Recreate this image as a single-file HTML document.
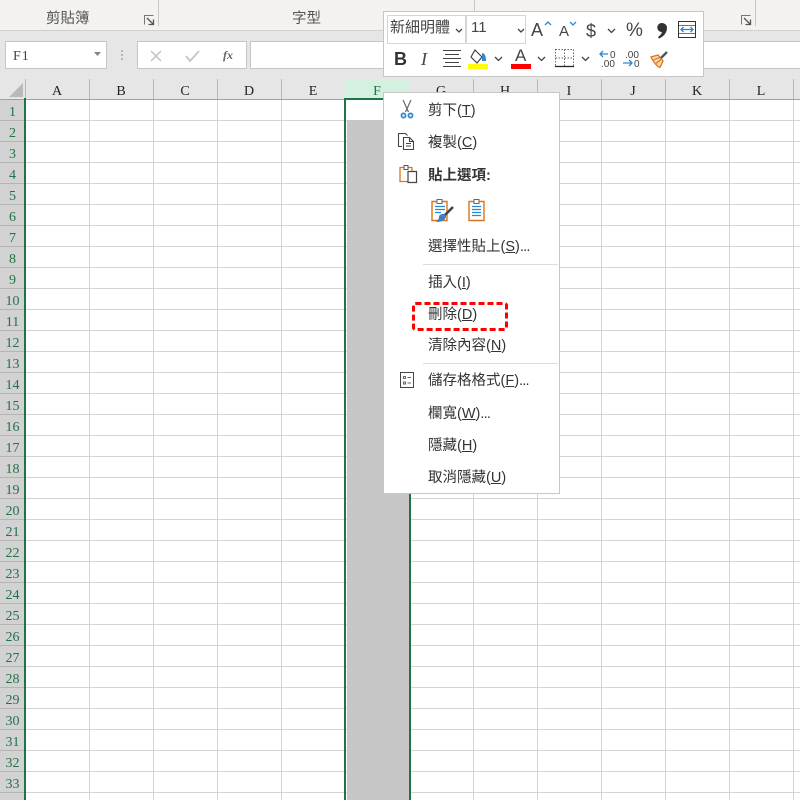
<!DOCTYPE html>
<html><head><meta charset="utf-8">
<style>
html,body{margin:0;padding:0;background:#fff}
#p{position:relative;width:800px;height:800px;overflow:hidden;background:#fff;font-family:"Liberation Sans","Noto Sans CJK TC",sans-serif;color:#444}
#p div,#p svg{position:absolute}
.t{white-space:nowrap}
.ch{font:14px/20px "Liberation Serif",serif;color:#222;text-align:center;top:82px;height:17px;width:64px;overflow:hidden}
#rows{left:0;top:100px;width:24px}
#rows span{display:block;height:20px;border-bottom:1px solid #b4b4b4;font:14px/25px "Liberation Serif",serif;color:#217346;text-align:center;padding-left:1px;box-sizing:content-box;width:23px}
.mi{left:428px;font-size:14.5px;line-height:20px;color:#333;white-space:nowrap;height:20px;margin-top:1px}
.mi u{text-underline-offset:1px}
.mi i{font-style:normal;letter-spacing:-.8px}
.sep{left:423px;width:135px;height:1px;background:#dcdcdc}
.ln{top:79px;width:1px;height:20px;background:#b9b9b9}
</style></head><body>
<div id="p">
<!-- ribbon -->
<div style="left:0;top:0;width:800px;height:30px;background:#f3f2f1"></div>
<div style="left:0;top:30px;width:800px;height:1px;background:#d2d0ce"></div>
<div style="left:158px;top:0;width:1px;height:26px;background:#c8c6c4"></div>
<div style="left:474px;top:0;width:1px;height:11px;background:#c8c6c4"></div>
<div style="left:755px;top:0;width:1px;height:26px;background:#c8c6c4"></div>
<div class="t" style="left:46px;top:9px;font-size:14.500px;line-height:20px;color:#555">剪貼簿</div>
<div class="t" style="left:292px;top:9px;font-size:14.500px;line-height:20px;color:#555">字型</div>
<svg style="left:144px;top:15px" width="11" height="11" viewBox="0 0 11 11"><path d="M9.500 .5H.5v9" fill="none" stroke="#777"/><path d="M3 3l6 6M9.500 4.500v5h-5" fill="none" stroke="#555" stroke-width="1.300"/></svg>
<svg style="left:741px;top:15px" width="11" height="11" viewBox="0 0 11 11"><path d="M9.500 .5H.5v9" fill="none" stroke="#777"/><path d="M3 3l6 6M9.500 4.500v5h-5" fill="none" stroke="#555" stroke-width="1.300"/></svg>
<!-- formula bar -->
<div style="left:0;top:31px;width:800px;height:48px;background:#e6e6e6"></div>
<div style="left:5px;top:41px;width:100px;height:26px;background:#fff;border:1px solid #c6c6c6"></div>
<div class="t" style="left:13px;top:47px;font:14px/20px 'Liberation Serif',serif;color:#444;letter-spacing:1px">F1</div>
<svg style="left:94px;top:52px" width="7" height="4"><path d="M0 0h7L3.500 4z" fill="#8a7f84"/></svg>
<div style="left:121px;top:50px;width:2px;height:2px;background:#b5b5b5;box-shadow:0 4px #b5b5b5,0 8px #b5b5b5"></div>
<div style="left:137px;top:41px;width:108px;height:26px;background:#fff;border:1px solid #c6c6c6"></div>
<svg style="left:150px;top:50px" width="12" height="12"><path d="M1 1l10 10M11 1L1 11" stroke="#c8c8c8" stroke-width="1.600" fill="none"/></svg>
<svg style="left:185px;top:50px" width="15" height="12"><path d="M1 6l4 5 9-10" stroke="#c8c8c8" stroke-width="2" fill="none"/></svg>
<div class="t" style="left:223px;top:46px;font:italic bold 12px/18px 'Liberation Serif',serif;color:#666">fx</div>
<div style="left:250px;top:41px;width:560px;height:26px;background:#fff;border:1px solid #c6c6c6"></div>
<!-- grid -->
<div style="left:26px;top:100px;width:774px;height:700px;background-color:#fff;background-image:repeating-linear-gradient(to right,transparent 0,transparent 63px,#d4d4d4 63px,#d4d4d4 64px),repeating-linear-gradient(to bottom,transparent 0,transparent 20px,#d4d4d4 20px,#d4d4d4 21px)"></div>
<!-- column header -->
<div style="left:0;top:79px;width:800px;height:20px;background:#e6e6e6"></div>
<div style="left:0;top:99px;width:800px;height:1px;background:#a0a0a0"></div>
<svg style="left:9px;top:83px" width="14" height="14"><path d="M14 0v14H0z" fill="#b9b9b9"/></svg>
<div class="ln" style="left:25px"></div>
<div class="ln" style="left:89px"></div>
<div class="ln" style="left:153px"></div>
<div class="ln" style="left:217px"></div>
<div class="ln" style="left:281px"></div>
<div class="ln" style="left:473px"></div>
<div class="ln" style="left:537px"></div>
<div class="ln" style="left:601px"></div>
<div class="ln" style="left:665px"></div>
<div class="ln" style="left:729px"></div>
<div class="ln" style="left:793px"></div>
<div style="left:346px;top:79px;width:63px;height:20px;background:#d3f0e0"></div>
<div class="ch" style="left:25px">A</div>
<div class="ch" style="left:89px">B</div>
<div class="ch" style="left:153px">C</div>
<div class="ch" style="left:217px">D</div>
<div class="ch" style="left:281px">E</div>
<div class="ch" style="left:345px;color:#217346">F</div>
<div class="ch" style="left:409px">G</div>
<div class="ch" style="left:473px">H</div>
<div class="ch" style="left:537px">I</div>
<div class="ch" style="left:601px">J</div>
<div class="ch" style="left:665px">K</div>
<div class="ch" style="left:729px">L</div>
<!-- row header -->
<div id="rows" style="background:#d2d2d2;height:700px"><span>1</span><span>2</span><span>3</span><span>4</span><span>5</span><span>6</span><span>7</span><span>8</span><span>9</span><span>10</span><span>11</span><span>12</span><span>13</span><span>14</span><span>15</span><span>16</span><span>17</span><span>18</span><span>19</span><span>20</span><span>21</span><span>22</span><span>23</span><span>24</span><span>25</span><span>26</span><span>27</span><span>28</span><span>29</span><span>30</span><span>31</span><span>32</span><span>33</span></div>
<div style="left:24px;top:98px;width:2px;height:702px;background:#217346"></div>
<!-- selection -->
<div style="left:347px;top:120px;width:62px;height:680px;background:#c6c6c6"></div>
<div style="left:344px;top:98px;width:67px;height:2px;background:#217346"></div>
<div style="left:344px;top:98px;width:2px;height:702px;background:#217346"></div>
<div style="left:409px;top:98px;width:2px;height:702px;background:#217346"></div>
<!-- context menu -->
<div style="left:383px;top:92px;width:175px;height:400px;background:#fff;border:1px solid #c6c6c6"></div>
<svg style="left:400px;top:100px" width="14" height="19" viewBox="0 0 14 19"><path d="M3 0l5.500 12M11 0L5.500 12" stroke="#666" stroke-width="1.200" fill="none"/><circle cx="3.500" cy="15.500" r="2.100" fill="none" stroke="#2e86d0" stroke-width="1.700"/><circle cx="10.500" cy="15.500" r="2.100" fill="none" stroke="#2e86d0" stroke-width="1.700"/></svg>
<div class="mi" style="top:100px">剪下(<u>T</u>)</div>
<svg style="left:397px;top:132px" width="19" height="19" viewBox="0 0 19 19" fill="none" stroke="#444" stroke-width="1.100"><path d="M5 14.500H1.500V1.500h7l2 2"/><path d="M6.500 5.500h6l4 4v8h-10z" fill="#fff"/><path d="M12.500 5.500v4h4M9 11.500h5M9 14h5"/></svg>
<div class="mi" style="top:132px">複製(<u>C</u>)</div>
<svg style="left:399px;top:164px" width="19" height="20" viewBox="0 0 19 20" fill="none"><path d="M1 3.500h12v14H1z" stroke="#d9761d" stroke-width="1.300"/><path d="M5 1.500h4v4H5z" stroke="#555" fill="#fff"/><path d="M9 7.500h8.500v11H9z" stroke="#444" stroke-width="1.200" fill="#fff"/></svg>
<div class="mi" style="top:165px;font-weight:700;color:#333;font-size:14.500px">貼上選項:</div>
<svg style="left:431px;top:198px" width="24" height="26" viewBox="0 0 24 26" fill="none"><path d="M1 3.500h15v19H1z" stroke="#d9761d" stroke-width="1.400" fill="#fff"/><path d="M6 1.500h5v4H6z" stroke="#666" fill="#fff"/><path d="M4 8.500h10M4 11.500h10M4 14.500h6" stroke="#2e86d0" stroke-width="1.200"/><path d="M22 9L13 18" stroke="#444" stroke-width="2.600"/><path d="M12 16c2 0 3 1 3 3-1 4-6 5-10 5 2-2 3-3 3-5 0-2 2-3 4-3z" fill="#3b7fc4"/></svg>
<svg style="left:468px;top:198px" width="18" height="24" viewBox="0 0 18 24" fill="none"><path d="M1 3.500h15v19H1z" stroke="#d9761d" stroke-width="1.400" fill="#fff"/><path d="M6 1.500h5v4H6z" stroke="#666" fill="#fff"/><path d="M4 8.500h9M4 11.500h9M4 14.500h9M4 17.500h9" stroke="#2e86d0" stroke-width="1.200"/></svg>
<div class="mi" style="top:236px">選擇性貼上(<u>S</u>)<i>...</i></div>
<div class="sep" style="top:264px"></div>
<div class="mi" style="top:272px">插入(<u>I</u>)</div>
<div class="mi" style="top:304px">刪除(<u>D</u>)</div>
<svg style="left:412px;top:302px" width="97" height="30" fill="none"><rect x="1.500" y="1.500" width="93" height="26" rx="2" stroke="#f00" stroke-width="3" stroke-dasharray="6 3"/></svg>
<div class="mi" style="top:335px">清除內容(<u>N</u>)</div>
<div class="sep" style="top:363px"></div>
<svg style="left:400px;top:372px" width="14" height="16" viewBox="0 0 14 16" fill="none"><path d="M.5.500h13v15H.5z" stroke="#444"/><path d="M3.500 4.500h2v2h-2zM3.500 10h2v2h-2z" stroke="#666"/><path d="M7.500 5.500h3.500M7.500 11h3.500" stroke="#666"/></svg>
<div class="mi" style="top:370px">儲存格格式(<u>F</u>)<i>...</i></div>
<div class="mi" style="top:403px">欄寬(<u>W</u>)<i>...</i></div>
<div class="mi" style="top:435px">隱藏(<u>H</u>)</div>
<div class="mi" style="top:467px">取消隱藏(<u>U</u>)</div>
<!-- mini toolbar -->
<div style="left:383px;top:11px;width:319px;height:64px;background:#fff;border:1px solid #c6c6c6"></div>
<div style="left:387px;top:15px;width:77px;height:27px;border:1.500px solid #d6d6d6"></div>
<div style="left:466px;top:15px;width:58px;height:27px;border:1.500px solid #d6d6d6"></div>
<div class="t" style="left:390px;top:18px;font-size:15px;line-height:20px;color:#444">新細明體</div>
<div class="t" style="left:471px;top:18px;font-size:15px;line-height:20px;color:#444">11</div>
<svg style="left:455px;top:28px" width="72" height="8" fill="none" stroke="#444" stroke-width="1.300"><path d="M1 1l3 3 3-3M63 1l3 3 3-3"/></svg>
<div class="t" style="left:531px;top:18px;font-size:18px;line-height:24px;color:#444">A</div>
<svg style="left:544px;top:21px" width="9" height="6" fill="none" stroke="#2e86d0" stroke-width="1.300"><path d="M1 4l3-3 3 3"/></svg>
<div class="t" style="left:559px;top:20px;font-size:15px;line-height:24px;color:#444">A</div>
<svg style="left:569px;top:21px" width="9" height="6" fill="none" stroke="#2e86d0" stroke-width="1.300"><path d="M1 1l3 3 3-3"/></svg>
<div class="t" style="left:586px;top:19px;font-size:18px;line-height:24px;color:#444">$</div>
<svg style="left:607px;top:28px" width="10" height="7" fill="none" stroke="#444" stroke-width="1.300"><path d="M1 1l3.500 3.500L8 1"/></svg>
<div class="t" style="left:626px;top:19px;font-size:19px;line-height:24px;color:#444">%</div>
<svg style="left:655px;top:22px" width="13" height="17" viewBox="0 0 13 17"><path d="M6.500 1a5 5 0 0 1 5.500 5c0 5-4 9-8 10.500l-1-1.500c2-1.500 3.500-3 4-5A4.500 4.500 0 0 1 6.500 1z" fill="#333"/></svg>
<svg style="left:678px;top:21px" width="18" height="17" viewBox="0 0 18 17" fill="none"><path d="M.5.500h17v16H.5z" stroke="#333"/><path d="M1 4.500h16M1 12.500h16" stroke="#2e86d0" stroke-width="1"/><path d="M3 8.500h12M5.500 6L3 8.500 5.500 11M12.500 6L15 8.500 12.500 11" stroke="#2e86d0" stroke-width="1.300"/></svg>
<div class="t" style="left:394px;top:47px;font:bold 18px/24px 'Liberation Sans',sans-serif;color:#333">B</div>
<div class="t" style="left:421px;top:47px;font:italic 18px/24px 'Liberation Serif',serif;color:#444">I</div>
<svg style="left:443px;top:49px" width="18" height="18" fill="none" stroke="#444"><path d="M0 1.500h18M2 5.500h14M0 9.500h18M2 13.500h14M0 17.500h18"/></svg>
<svg style="left:468px;top:48px" width="21" height="22" viewBox="0 0 21 22"><path d="M7 2l7 7-5 6-6-6z" fill="#fff" stroke="#444" stroke-width="1.200"/><path d="M14 5c3 0 4 4 4 8h-4z" fill="#2e86d0"/><rect y="16" width="20" height="5" fill="#ff0"/></svg>
<svg style="left:494px;top:56px" width="10" height="7" fill="none" stroke="#444" stroke-width="1.300"><path d="M1 1l3.500 3.500L8 1"/></svg>
<div class="t" style="left:515px;top:45px;font-size:17px;line-height:22px;color:#444">A</div>
<div style="left:511px;top:64px;width:20px;height:5px;background:#f00"></div>
<svg style="left:537px;top:56px" width="10" height="7" fill="none" stroke="#444" stroke-width="1.300"><path d="M1 1l3.500 3.500L8 1"/></svg>
<svg style="left:555px;top:49px" width="19" height="19" viewBox="0 0 19 19" fill="none"><path d="M.5.500h18v17H.5zM9.500.500v17M.5 9h18" stroke="#666" stroke-dasharray="1.500 1.500"/><path d="M0 17.500h19" stroke="#222" stroke-width="1.300"/></svg>
<svg style="left:581px;top:56px" width="10" height="7" fill="none" stroke="#444" stroke-width="1.300"><path d="M1 1l3.500 3.500L8 1"/></svg>
<svg style="left:598px;top:49px" width="46" height="20" font-family="Liberation Sans" font-size="10" fill="#444"><text x="12" y="9">0</text><text x="3" y="18">.00</text><path d="M10 5H2M5 2L2 5l3 3" stroke="#2e86d0" stroke-width="1.300" fill="none"/><text x="27" y="9">.00</text><text x="36" y="18">0</text><path d="M25 14h9M31 11l3 3-3 3" stroke="#2e86d0" stroke-width="1.300" fill="none"/></svg>
<svg style="left:650px;top:51px" width="20" height="17" viewBox="0 0 20 17" fill="none"><path d="M1 6l7-2 5 6-3 6.500C6 15 3 10 1 6z" fill="#f8d9b8" stroke="#d9761d" stroke-width="1.300"/><path d="M3.500 9l6-2.500M6 12.500l5-4" stroke="#d9761d" stroke-width="1.200"/><path d="M11 7l6-6" stroke="#555" stroke-width="2.400"/></svg>
</div>
</body></html>
